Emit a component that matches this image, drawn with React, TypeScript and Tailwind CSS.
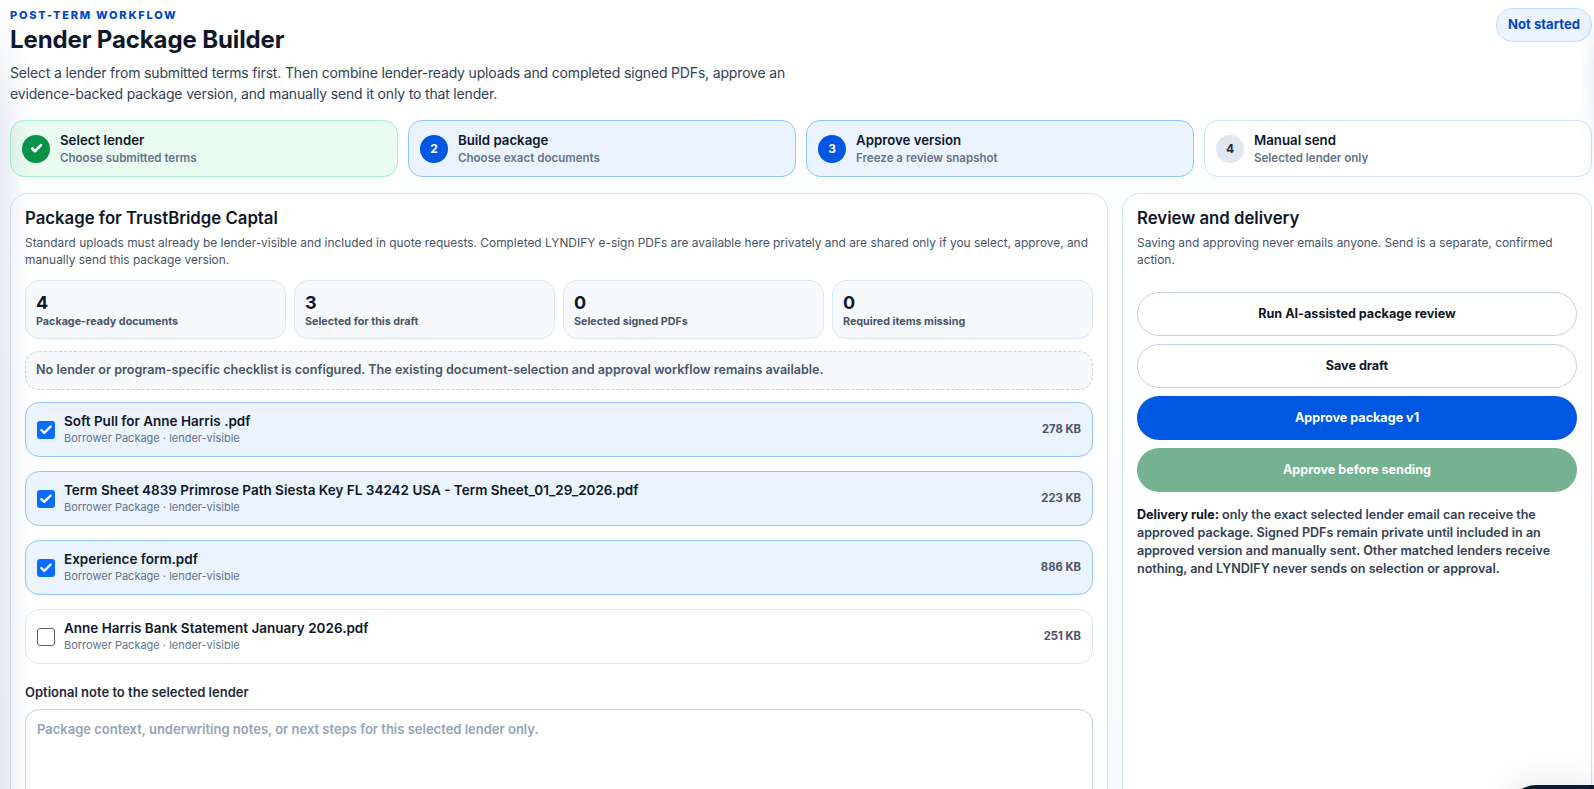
import { Check } from "lucide-react";

const steps = [
  { n: "check", title: "Select lender", sub: "Choose submitted terms", tone: "done" },
  { n: "2", title: "Build package", sub: "Choose exact documents", tone: "active" },
  { n: "3", title: "Approve version", sub: "Freeze a review snapshot", tone: "active" },
  { n: "4", title: "Manual send", sub: "Selected lender only", tone: "idle" },
];

const stats = [
  { value: "4", label: "Package-ready documents" },
  { value: "3", label: "Selected for this draft" },
  { value: "0", label: "Selected signed PDFs" },
  { value: "0", label: "Required items missing" },
];

const docs = [
  { name: "Soft Pull for Anne Harris .pdf", size: "278 KB", checked: true },
  { name: "Term Sheet 4839 Primrose Path Siesta Key FL 34242 USA - Term Sheet_01_29_2026.pdf", size: "223 KB", checked: true },
  { name: "Experience form.pdf", size: "886 KB", checked: true },
  { name: "Anne Harris Bank Statement January 2026.pdf", size: "251 KB", checked: false },
];

function StepCard({ n, title, sub, tone }: { n: string; title: string; sub: string; tone: string }) {
  const card =
    tone === "done"
      ? "border-[#a9f0cd] bg-[#eafbf1]"
      : tone === "active"
        ? "border-[#93c5fd] bg-[#eaf3fe]"
        : "border-[#d3e1f0] bg-white";
  const dot =
    tone === "done"
      ? "bg-[#059447] text-white"
      : tone === "active"
        ? "bg-[#0057e1] text-white"
        : "bg-[#e2e8f0] text-[#1e293b]";
  return (
    <div className={`flex h-[57px] items-center gap-[10px] rounded-[14px] border px-[11px] ${card}`}>
      <div className={`flex size-[28px] shrink-0 items-center justify-center rounded-full text-[12px] font-bold ${dot}`}>
        {n === "check" ? <Check size={13} strokeWidth={5} /> : n}
      </div>
      <div className="min-w-0">
        <div className="text-[13.25px] leading-[18px] font-semibold text-[#0f172a]">{title}</div>
        <div className="mt-[1px] text-[11.55px] leading-[16px] font-semibold text-[#64748b]">{sub}</div>
      </div>
    </div>
  );
}

function DocRow({ name, size, checked }: { name: string; size: string; checked: boolean }) {
  return (
    <div
      className={`flex h-[55px] items-center gap-[9px] rounded-[14px] border px-[11px] ${
        checked ? "border-[#93c5fd] bg-[#eaf3fe]" : "border-[#dbe7f3] bg-white"
      }`}
    >
      {checked ? (
        <div className="flex size-[18px] shrink-0 items-center justify-center rounded-[3px] bg-[#0a6cff] text-white">
          <Check size={14} strokeWidth={4} />
        </div>
      ) : (
        <div className="size-[18px] shrink-0 rounded-[3px] border border-[#5b5f66] bg-white" />
      )}
      <div className="min-w-0 flex-1">
        <div className="text-[13.5px] leading-[17px] font-semibold text-[#0f172a]">{name}</div>
        <div className="text-[11px] leading-[16px] text-[#64748b]">Borrower Package · lender-visible</div>
      </div>
      <div className="text-[11.25px] font-bold text-[#475569]">{size}</div>
    </div>
  );
}

export default function App() {
  return (
    <div className="relative h-[789px] overflow-hidden bg-gradient-to-b from-white to-[#f7fbff] pr-[2px] pl-[10px] font-['Inter',sans-serif]">
      <header className="flex h-[120px] items-start justify-between">
        <div className="w-[790px] pt-[9px]">
          <div className="text-[11px] leading-[13px] font-extrabold tracking-[0.16em] text-[#0047c7]">POST-TERM WORKFLOW</div>
          <h1 className="mt-[2px] text-[24px] leading-[32px] font-bold tracking-[-0.005em] text-[#0f172a]">Lender Package Builder</h1>
          <p className="mt-[6px] text-[14px] leading-[21px] tracking-[-0.012em] text-[#334155]">
            Select a lender from submitted terms first. Then combine lender-ready uploads and completed signed PDFs, approve an evidence-backed package version, and manually send it only to that lender.
          </p>
        </div>
        <div className="mt-[8px] flex h-[34px] items-center rounded-full border border-[#bfdbfe] bg-[#eaf3fe] px-[11px] text-[13.1px] font-bold text-[#0047c7]">
          Not started
        </div>
      </header>

      <div className="grid grid-cols-4 gap-[10px]">
        {steps.map((s) => (
          <StepCard key={s.title} {...s} />
        ))}
      </div>

      <div className="mt-[16px] grid grid-cols-[1098px_1fr] gap-[14px]">
        <section className="h-[760px] rounded-[18px] border border-[#d3e1f0] bg-white px-[14px] pt-[12px]">
          <h2 className="text-[16.75px] leading-[24px] font-semibold text-[#0f172a]">Package for TrustBridge Captal</h2>
          <p className="mt-[4px] text-[11.9px] leading-[17px] text-[#475569]">
            Standard uploads must already be lender-visible and included in quote requests. Completed LYNDIFY e-sign PDFs are available here privately and are shared only if you select, approve, and manually send this package version.
          </p>

          <div className="mt-[12px] grid grid-cols-4 gap-[8px]">
            {stats.map((s) => (
              <div key={s.label} className="h-[59px] rounded-[14px] border border-[#dbe7f3] bg-[#f7f9fc] px-[10px] pt-[10px]">
                <div className="text-[18px] leading-[24px] font-bold text-[#0f172a]">{s.value}</div>
                <div className="text-[10.75px] leading-[13px] font-bold text-[#475569]">{s.label}</div>
              </div>
            ))}
          </div>

          <div className="mt-[12px] flex h-[39px] items-center rounded-[14px] border border-dashed border-[#cbd5e1] bg-[#f7f9fc] px-[10px] text-[12.6px] font-semibold text-[#475569]">
            No lender or program-specific checklist is configured. The existing document-selection and approval workflow remains available.
          </div>

          <div className="mt-[12px] flex flex-col gap-[14px]">
            {docs.map((d) => (
              <DocRow key={d.name} {...d} />
            ))}
          </div>

          <label className="mt-[19px] block text-[13px] leading-[18px] font-semibold text-[#1e293b]">Optional note to the selected lender</label>
          <div className="mt-[8px] h-[130px] rounded-[14px] border border-[#c4d2e2] bg-white px-[11px] py-[10px] text-[13px] leading-[18px] font-semibold text-[#94a3b8]">
            Package context, underwriting notes, or next steps for this selected lender only.
          </div>
        </section>

        <aside className="h-[760px] rounded-[18px] border border-[#d3e1f0] bg-white px-[14px] pt-[12px]">
          <h2 className="text-[16.75px] leading-[24px] font-semibold text-[#0f172a]">Review and delivery</h2>
          <p className="mt-[4px] text-[11.9px] leading-[17px] text-[#475569]">
            Saving and approving never emails anyone. Send is a separate, confirmed action.
          </p>

          <div className="mt-[24px] flex flex-col gap-[8px]">
            <button className="h-[44px] rounded-full border border-[#c4d2e2] bg-white text-[12.6px] font-bold text-[#0f172a]">Run AI-assisted package review</button>
            <button className="h-[44px] rounded-full border border-[#c4d2e2] bg-white text-[12.6px] font-bold text-[#0f172a]">Save draft</button>
            <button className="h-[44px] rounded-full bg-[#0057e1] text-[12.6px] font-bold text-white">Approve package v1</button>
            <button className="h-[44px] rounded-full bg-[#74b291] text-[12.6px] font-bold text-white">Approve before sending</button>
          </div>

          <p className="mt-[14px] text-[12.55px] leading-[18px] font-semibold text-[#334155]">
            <strong className="font-bold text-[#0f172a]">Delivery rule:</strong> only the exact selected lender email can receive the approved package. Signed PDFs remain private until included in an approved version and manually sent. Other matched lenders receive nothing, and LYNDIFY never sends on selection or approval.
          </p>
        </aside>
      </div>

      {/* soft edge shading that sits over the page */}
      <div className="pointer-events-none absolute top-0 bottom-0 left-0 w-[30px] bg-gradient-to-r from-slate-400/20 to-transparent [mask-image:linear-gradient(to_bottom,transparent,black_130px)]" />
      <div className="pointer-events-none absolute top-0 right-0 bottom-0 w-[14px] bg-gradient-to-l from-slate-400/15 to-transparent [mask-image:linear-gradient(to_bottom,transparent,black_70px,transparent_200px)]" />

      <div className="absolute right-0 bottom-[-40px] h-[44px] w-[86px] rounded-tl-[28px] bg-[#0b1b33] shadow-[0_0_40px_rgba(15,23,42,0.12)]" />
    </div>
  );
}
